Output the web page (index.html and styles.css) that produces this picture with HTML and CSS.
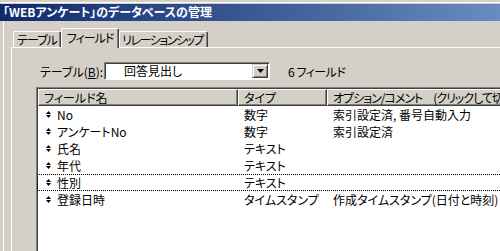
FILE: index.html
```html
<!DOCTYPE html>
<html lang="ja">
<head>
    <meta charset="UTF-8">
    <title>データベースの管理</title>
    <link rel="stylesheet" href="styles.css">
</head>
<body>

    <div class="window">
        <div class="titlebar">「WEBアンケート」のデータベースの管理</div>

        <div class="client">
            <div class="tabs">
                <div class="tab tab-table">テーブル</div>
                <div class="tab tab-field active">フィールド</div>
                <div class="tab tab-rel">リレーションシップ</div>
            </div>

            <div class="panel">
                <div class="table-select">
                    <span class="label">テーブル(<u>B</u>):</span>
                    <div class="combo">
                        <span class="combo-text">回答見出し</span>
                        <span class="combo-btn">
                            <svg width="7" height="4" viewBox="0 0 7 4"><polygon points="0,0 7,0 3.5,4" fill="#000"/></svg>
                        </span>
                    </div>
                    <span class="count">6 フィールド</span>
                </div>

                <div class="listview">
                    <div class="lv-header">
                        <div class="col c1">フィールド名</div>
                        <div class="col c2">タイプ</div>
                        <div class="col c3 squeeze">オプション/コメント　(クリックして切り替え)</div>
                    </div>

                    <div class="lv-row">
                        <div class="cell c1"><svg class="key" width="5" height="7" viewBox="0 0 5 7"><polygon points="2.5,0 5,3 0,3" /><polygon points="0,4 5,4 2.5,7" /></svg>No</div>
                        <div class="cell c2">数字</div>
                        <div class="cell c3">索引設定済, 番号自動入力</div>
                    </div>
                    <div class="lv-row">
                        <div class="cell c1"><svg class="key" width="5" height="7" viewBox="0 0 5 7"><polygon points="2.5,0 5,3 0,3" /><polygon points="0,4 5,4 2.5,7" /></svg>アンケートNo</div>
                        <div class="cell c2">数字</div>
                        <div class="cell c3">索引設定済</div>
                    </div>
                    <div class="lv-row">
                        <div class="cell c1"><svg class="key" width="5" height="7" viewBox="0 0 5 7"><polygon points="2.5,0 5,3 0,3" /><polygon points="0,4 5,4 2.5,7" /></svg>氏名</div>
                        <div class="cell c2">テキスト</div>
                        <div class="cell c3"></div>
                    </div>
                    <div class="lv-row">
                        <div class="cell c1"><svg class="key" width="5" height="7" viewBox="0 0 5 7"><polygon points="2.5,0 5,3 0,3" /><polygon points="0,4 5,4 2.5,7" /></svg>年代</div>
                        <div class="cell c2">テキスト</div>
                        <div class="cell c3"></div>
                    </div>
                    <div class="lv-row focused">
                        <div class="cell c1"><svg class="key" width="5" height="7" viewBox="0 0 5 7"><polygon points="2.5,0 5,3 0,3" /><polygon points="0,4 5,4 2.5,7" /></svg>性別</div>
                        <div class="cell c2">テキスト</div>
                        <div class="cell c3"></div>
                    </div>
                    <div class="lv-row">
                        <div class="cell c1"><svg class="key" width="5" height="7" viewBox="0 0 5 7"><polygon points="2.5,0 5,3 0,3" /><polygon points="0,4 5,4 2.5,7" /></svg>登録日時</div>
                        <div class="cell c2">タイムスタンプ</div>
                        <div class="cell c3">作成タイムスタンプ(日付と時刻)</div>
                    </div>
                </div>
            </div>
        </div>
    </div>

</body>
</html>
```

FILE: styles.css
```css
body {
    margin: 0;
    background-color: #d4d0c8;
    font-family: "Noto Sans CJK JP", "Noto Sans", sans-serif;
    font-size: 12px;
    font-feature-settings: "palt";
    color: #000;
}

.window {
    width: 500px;
    height: 251px;
    overflow: hidden;
    padding-top: 2px;
    box-sizing: border-box;
    white-space: nowrap;
}

.titlebar {
    border-top: 1px solid #fff;
    height: 18px;
    line-height: 18px;
    padding-left: 3px;
    color: #fff;
    font-weight: bold;
    background: linear-gradient(to right, #0e2a6c 0, #3a5895 250px, #6a8bc0 500px);
    box-shadow: inset 0 1px 0 #d4d0c8;
}

.client {
    margin-left: 3px;
    border-left: 1px solid #fff;
    height: 230px;
}

/* tabs */
.tabs {
    display: flex;
    align-items: flex-end;
    height: 19px;
    padding-top: 7px;
    padding-left: 9px;
    position: relative;
    z-index: 1;
}

.tab {
    height: 16px;
    line-height: 15px;
    box-sizing: border-box;
    border-top: 1px solid #fff;
    border-left: 1px solid #fff;
    border-right: 1px solid #404040;
    border-top-left-radius: 2px;
    border-top-right-radius: 2px;
    box-shadow: inset -1px 0 0 #808080;
    text-align: center;
    letter-spacing: -1px;
    background-color: #d4d0c8;
}

.tab-table {
    width: 48px;
}

.tab-field {
    width: 58px;
}

.tab-rel {
    width: 89px;
    letter-spacing: -1.5px;
    padding-right: 2px;
}

.tab.active {
    height: 20px;
    line-height: 17px;
    margin-bottom: -1px;
}

.panel {
    margin-left: 7px;
    border-top: 1px solid #fff;
    border-left: 1px solid #fff;
    padding-top: 14px;
    padding-left: 24px;
    height: 200px;
}

/* table selector */
.table-select {
    display: flex;
    align-items: center;
    height: 18px;
}

.label {
    width: 64px;
    margin-left: 4px;
}

.combo {
    width: 166px;
    height: 18px;
    box-sizing: border-box;
    border-top: 1px solid #808080;
    border-left: 1px solid #808080;
    border-bottom: 1px solid #fff;
    border-right: 1px solid #fff;
    box-shadow: inset 1px 1px 0 #404040;
    background-color: #fff;
    display: flex;
    align-items: center;
    justify-content: space-between;
    padding: 1px 1px 1px 19px;
}

.combo-text {
    line-height: 14px;
}

.combo-btn {
    width: 16px;
    height: 14px;
    box-sizing: border-box;
    background-color: #d4d0c8;
    border-top: 1px solid #d4d0c8;
    border-left: 1px solid #d4d0c8;
    border-right: 1px solid #404040;
    border-bottom: 1px solid #404040;
    box-shadow: inset 1px 1px 0 #fff, inset -1px -1px 0 #808080;
    display: flex;
    align-items: center;
    justify-content: center;
}

.count {
    margin-left: 18px;
    letter-spacing: -0.5px;
}

/* list view */
.listview {
    margin-top: 7px;
    width: 600px;
    height: 200px;
    background-color: #fff;
    border-top: 1px solid #808080;
    border-left: 1px solid #808080;
    box-shadow: inset 1px 1px 0 #404040;
    padding: 1px 0 0 1px;
}

.lv-header {
    display: flex;
    height: 17px;
    line-height: 15px;
    background-color: #d4d0c8;
}

.col {
    box-sizing: border-box;
    height: 17px;
    border-top: 1px solid #fff;
    border-left: 1px solid #fff;
    border-right: 1px solid #404040;
    border-bottom: 1px solid #404040;
    box-shadow: inset -1px -1px 0 #808080;
    padding-left: 5px;
}

.squeeze {
    letter-spacing: -1px;
}

.c1 {
    width: 200px;
}

.c2 {
    width: 89px;
}

.c3 {
    flex: 1;
}

.lv-row {
    display: flex;
    height: 17px;
    box-sizing: border-box;
    border: 1px dotted transparent;
    margin-left: -1px;
}

.lv-row.focused {
    border-color: #000;
}

.cell {
    box-sizing: border-box;
    padding-left: 6px;
    line-height: 15px;
}

.cell.c1 {
    padding-left: 8px;
    display: flex;
    align-items: center;
}

.key {
    margin-right: 6px;
    fill: #000;
}
```
